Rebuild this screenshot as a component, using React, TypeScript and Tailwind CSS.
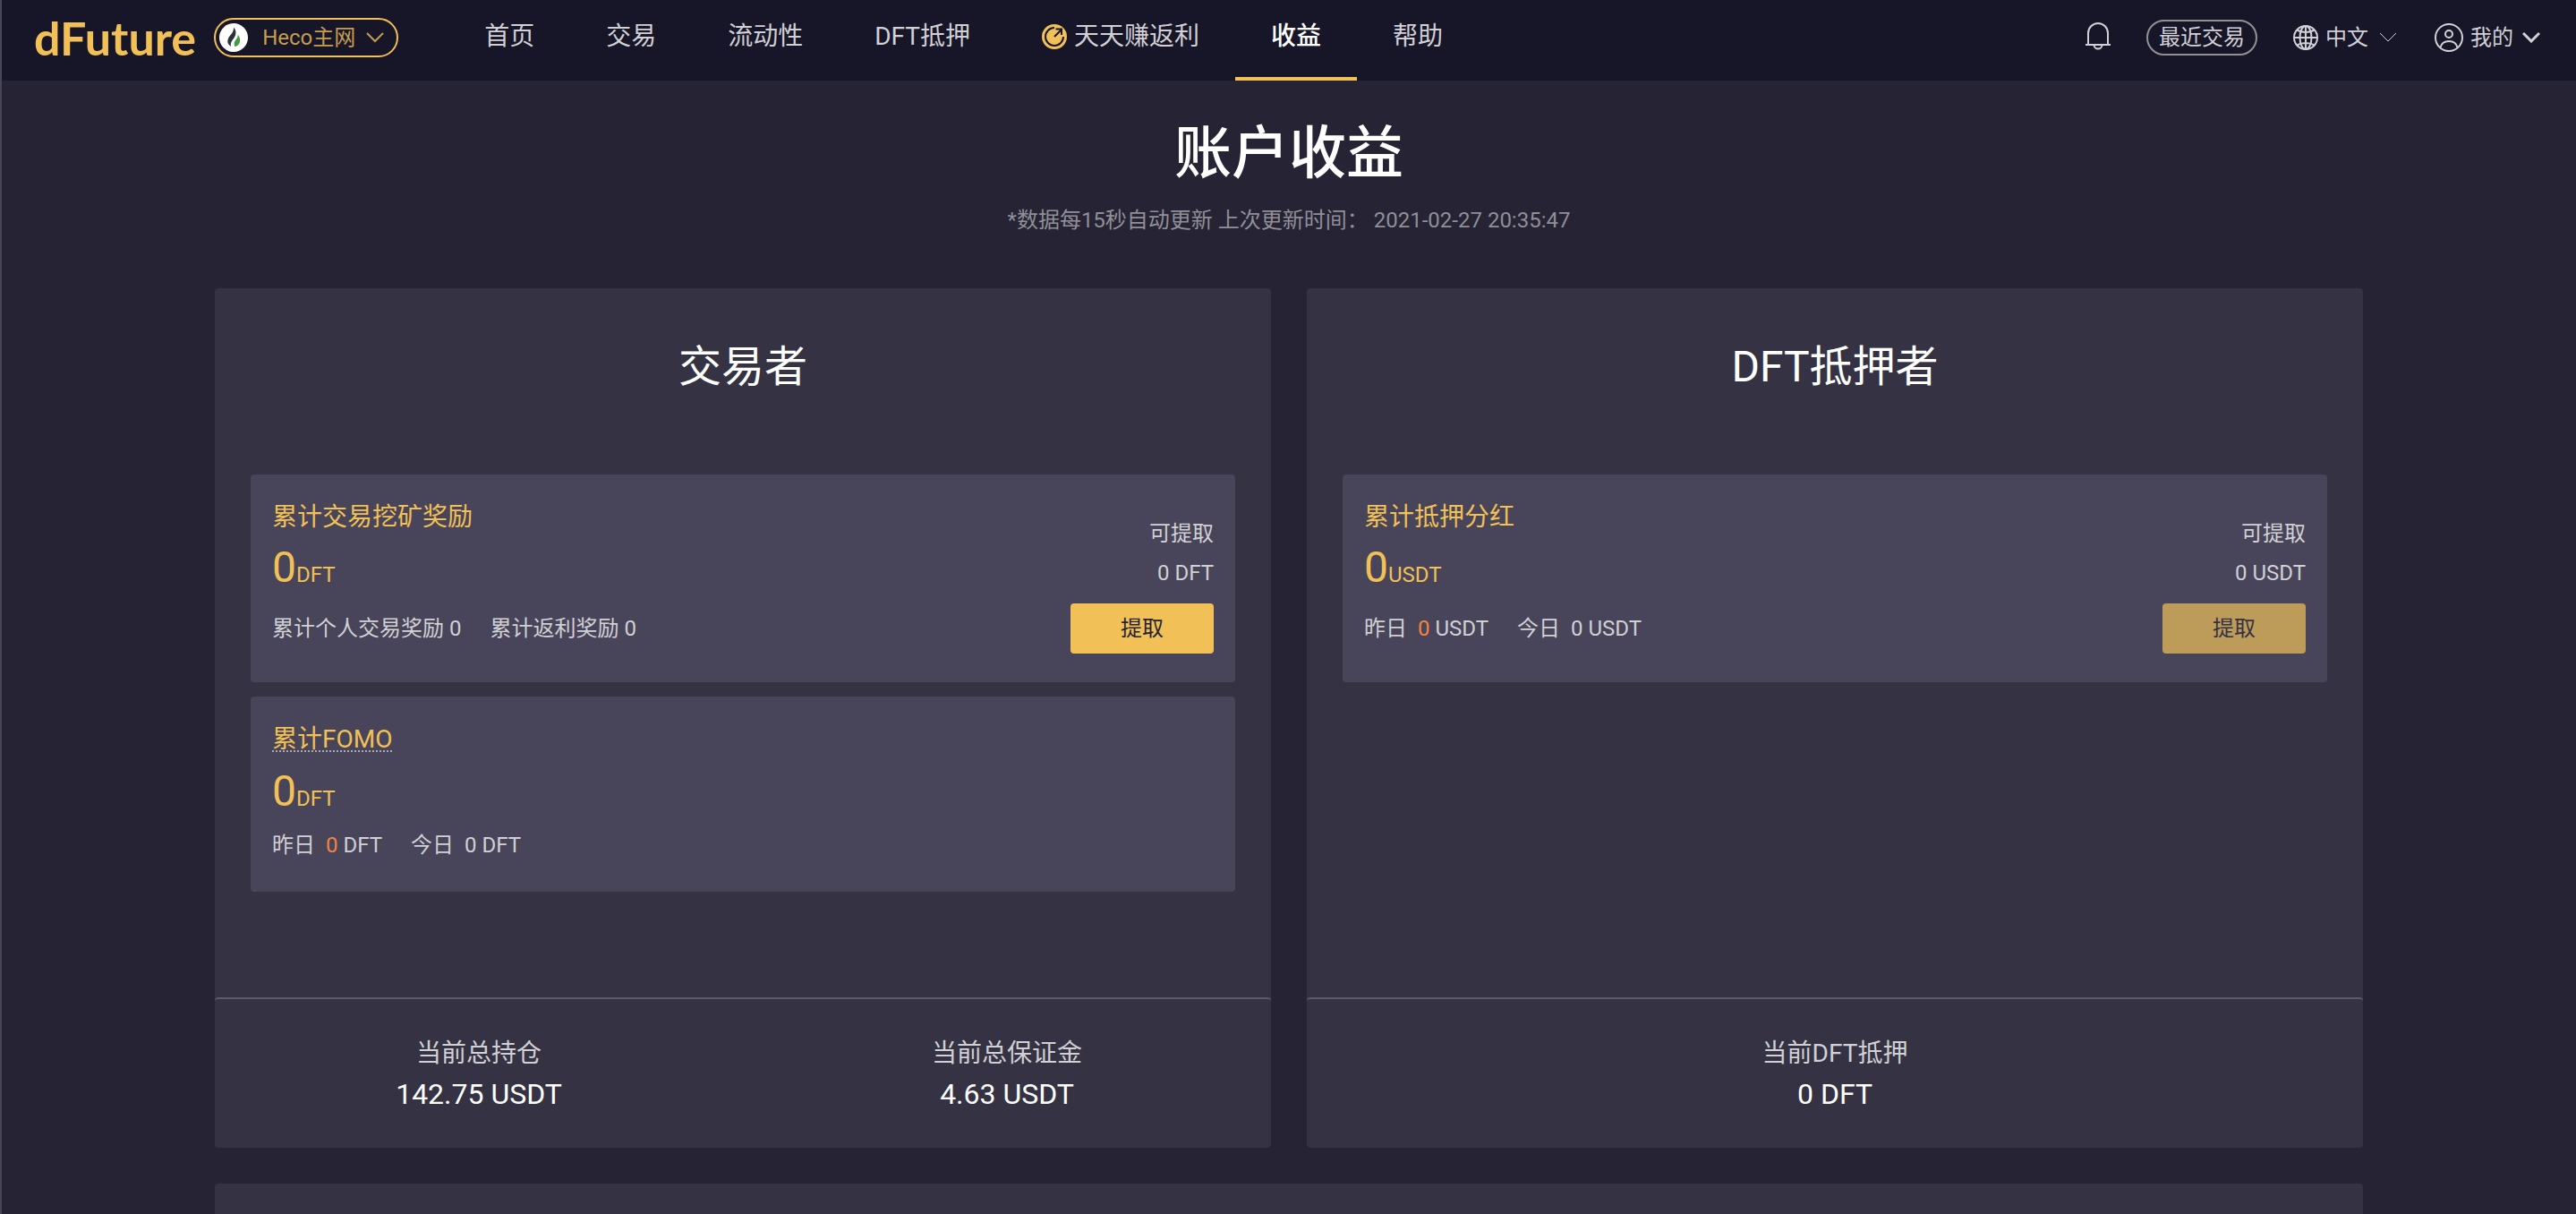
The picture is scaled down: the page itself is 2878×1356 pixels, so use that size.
import type { ReactNode } from "react";

type Stat = { label: string; value: string };

const navItems = [
  { label: "首页" },
  { label: "交易" },
  { label: "流动性" },
  { label: "DFT抵押" },
  { label: "天天赚返利", icon: true },
  { label: "收益", active: true },
  { label: "帮助" },
];

function Chevron({ strokeWidth = 2 }: { strokeWidth?: number }) {
  return (
    <svg width="20" height="12" viewBox="0 0 20 12" fill="none" stroke="currentColor" strokeWidth={strokeWidth} aria-hidden>
      <path d="M1 1l9 9 9-9" />
    </svg>
  );
}

function HecoIcon() {
  return (
    <svg width="32" height="32" viewBox="0 0 32 32" aria-hidden>
      <circle cx="16" cy="16" r="16" fill="#fff" />
      <path
        d="M16 4.500c.4 4-1.600 6.200-4.200 9.500-3 4-4 8.500 1.200 12-.6-3.700.4-5.600 2.500-8.300 3.300-4 4.300-9.200.5-13.200z"
        fill="#2c3237"
      />
      <path
        d="M20.700 12.500c3.300 4.200 3.300 9.800-.5 12.500-1 .6-2 .9-3 .9-1.200-3.800-.2-5.700 1.600-7.900 1.500-1.700 2.100-3.300 1.900-5.500z"
        fill="#449846"
      />
    </svg>
  );
}

function RebateIcon() {
  return (
    <svg width="28" height="28" viewBox="0 0 28 28" fill="none" aria-hidden>
      <circle cx="14" cy="14" r="14" fill="#f1c056" />
      <path d="M14 4a10 10 0 1 0 10 10" stroke="#171528" strokeWidth="2" />
      <path d="M14 14l8-8M15.500 5.500h6.500v6.500" stroke="#171528" strokeWidth="2" />
    </svg>
  );
}

function BellIcon() {
  return (
    <svg width="28" height="32" viewBox="0 0 28 32" fill="none" stroke="currentColor" strokeWidth="2" aria-hidden>
      <path d="M3 26V13a11 11 0 0 1 22 0v13M0 26h28M9.500 26a4.500 4.500 0 0 0 9 0" />
    </svg>
  );
}

function GlobeIcon() {
  return (
    <svg width="28" height="28" viewBox="0 0 28 28" fill="none" stroke="currentColor" strokeWidth="2" aria-hidden>
      <circle cx="14" cy="14" r="13" />
      <ellipse cx="14" cy="14" rx="6.500" ry="13" />
      <path d="M14 1v26M1 14h26M4 5.500c6 3.300 14 3.300 20 0M4 22.500c6-3.300 14-3.300 20 0" />
    </svg>
  );
}

function UserIcon() {
  return (
    <svg width="32" height="32" viewBox="0 0 32 32" fill="none" stroke="currentColor" strokeWidth="2" aria-hidden>
      <circle cx="16" cy="16" r="15" />
      <circle cx="16" cy="12" r="4" />
      <path d="M6.500 27c1-4 4.500-7 9.500-7s8.500 3 9.500 7" />
    </svg>
  );
}

function Header() {
  return (
    <header className="flex h-[90px] items-start justify-between bg-[#171528] pr-10 pl-9 text-[#d1d0d4]">
      <div className="flex">
        <a href="#" className="mt-3 h-[60px] font-['Lato'] text-[52px] leading-[60px] font-bold text-[#f1c056]">
          dFuture
        </a>
        <button
          type="button"
          className="mt-5 ml-5 flex h-11 w-[206px] items-center rounded-full border-2 border-[#f1c056] pl-1 text-2xl text-[#c49d4e]"
        >
          <HecoIcon />
          <span className="mr-3 ml-4 whitespace-nowrap">Heco主网</span>
          <Chevron />
        </button>
        <nav className="ml-14 flex h-[90px] text-[28px]">
          {navItems.map((item) => (
            <a
              key={item.label}
              href="#"
              className={
                item.active
                  ? "flex items-center gap-2 border-b-4 border-[#f1c056] px-10 pb-1 font-medium whitespace-nowrap text-white"
                  : "flex items-center gap-2 border-b-4 border-transparent px-10 pb-1 whitespace-nowrap"
              }
            >
              {item.icon ? <RebateIcon /> : null}
              {item.label}
            </a>
          ))}
        </nav>
      </div>
      <div className="flex h-[84px] items-center text-2xl">
        <button type="button" aria-label="通知" className="mr-10 pb-1">
          <BellIcon />
        </button>
        <button type="button" className="mr-10 h-10 w-[124px] rounded-full border-2 border-[#919292] leading-9">
          最近交易
        </button>
        <button type="button" className="mr-[42px] flex items-center">
          <GlobeIcon />
          <span className="mr-3 ml-2">中文</span>
          <Chevron strokeWidth={1} />
        </button>
        <button type="button" className="flex items-center">
          <UserIcon />
          <span className="mr-2.5 ml-2">我的</span>
          <Chevron strokeWidth={3} />
        </button>
      </div>
    </header>
  );
}

function Amount({ value, unit }: { value: string; unit: string }) {
  return (
    <p className="flex items-baseline text-[#f1c056]">
      <span className="text-5xl leading-[64px]">{value}</span>
      <span className="text-2xl leading-6">{unit}</span>
    </p>
  );
}

function DayRow({ unit }: { unit: string }) {
  return (
    <p className="flex gap-8 text-2xl leading-8">
      <span className="flex gap-3">
        昨日
        <span>
          <span className="text-[#f18343]">0</span> {unit}
        </span>
      </span>
      <span className="flex gap-3">
        今日
        <span>0 {unit}</span>
      </span>
    </p>
  );
}

function Withdraw({ amount, disabled }: { amount: string; disabled?: boolean }) {
  return (
    <div className="flex flex-col items-end pt-5 text-2xl">
      <span className="leading-[44px]">可提取</span>
      <span className="leading-[44px]">{amount}</span>
      <button
        type="button"
        disabled={disabled}
        className="mt-3 h-14 w-40 rounded bg-[#f1c056] text-[#252334] disabled:bg-[#bd9b59] disabled:text-[#343243]"
      >
        提取
      </button>
    </div>
  );
}

function Panel({ title, stats, children }: { title: string; stats: Stat[]; children: ReactNode }) {
  return (
    <section className="flex flex-1 flex-col rounded bg-[#343243]">
      <div className="flex min-h-[792px] flex-col px-10 pt-14">
        <h2 className="mb-[88px] text-center text-5xl leading-[64px] text-white">{title}</h2>
        <div className="flex flex-col gap-4">{children}</div>
      </div>
      <dl className="flex rounded border-t-2 border-[#5c5a69] py-[38px] text-center">
        {stats.map((stat) => (
          <div key={stat.label} className="flex-1">
            <dt className="text-[28px] leading-[46px]">{stat.label}</dt>
            <dd className="text-[32px] leading-[44px] text-white">{stat.value}</dd>
          </div>
        ))}
      </dl>
    </section>
  );
}

export default function App() {
  return (
    <div className="flex min-h-screen flex-col border-l-2 border-[#474556] bg-[#252334] font-['Roboto','Noto_Sans_CJK_SC',sans-serif] text-[#d1d0d4]">
      <Header />
      <main className="mx-auto flex w-full max-w-[2400px] flex-1 flex-col">
        <h1 className="mt-9 text-center text-[64px] leading-[92px] font-medium text-white">账户收益</h1>
        <p className="mt-3 mb-[60px] text-center text-2xl text-[#908f97]">
          *数据每15秒自动更新 上次更新时间： 2021-02-27 20:35:47
        </p>
        <div className="flex gap-10">
          <Panel
            title="交易者"
            stats={[
              { label: "当前总持仓", value: "142.75 USDT" },
              { label: "当前总保证金", value: "4.63 USDT" },
            ]}
          >
            <article className="flex justify-between rounded bg-[#48455a] px-6 pt-6 pb-8">
              <div>
                <h3 className="text-[28px] leading-[48px] text-[#f1c056]">累计交易挖矿奖励</h3>
                <Amount value="0" unit="DFT" />
                <p className="mt-5 flex gap-8 text-2xl leading-8">
                  <span>累计个人交易奖励 0</span>
                  <span>累计返利奖励 0</span>
                </p>
              </div>
              <Withdraw amount="0 DFT" />
            </article>
            <article className="rounded bg-[#48455a] px-6 pt-6 pb-9">
              <h3 className="flex h-[50px] items-start text-[28px] text-[#f1c056]">
                <abbr className="mt-3 border-b-2 border-dotted border-[#a9a8b3] leading-6 no-underline">累计FOMO</abbr>
              </h3>
              <div className="mb-3">
                <Amount value="0" unit="DFT" />
              </div>
              <DayRow unit="DFT" />
            </article>
          </Panel>
          <Panel title="DFT抵押者" stats={[{ label: "当前DFT抵押", value: "0 DFT" }]}>
            <article className="flex justify-between rounded bg-[#48455a] px-6 pt-6 pb-8">
              <div>
                <h3 className="text-[28px] leading-[48px] text-[#f1c056]">累计抵押分红</h3>
                <div className="mb-5">
                  <Amount value="0" unit="USDT" />
                </div>
                <DayRow unit="USDT" />
              </div>
              <Withdraw amount="0 USDT" disabled />
            </article>
          </Panel>
        </div>
        <section className="mt-10 min-h-8 flex-1 rounded-t bg-[#343243]" />
      </main>
    </div>
  );
}
